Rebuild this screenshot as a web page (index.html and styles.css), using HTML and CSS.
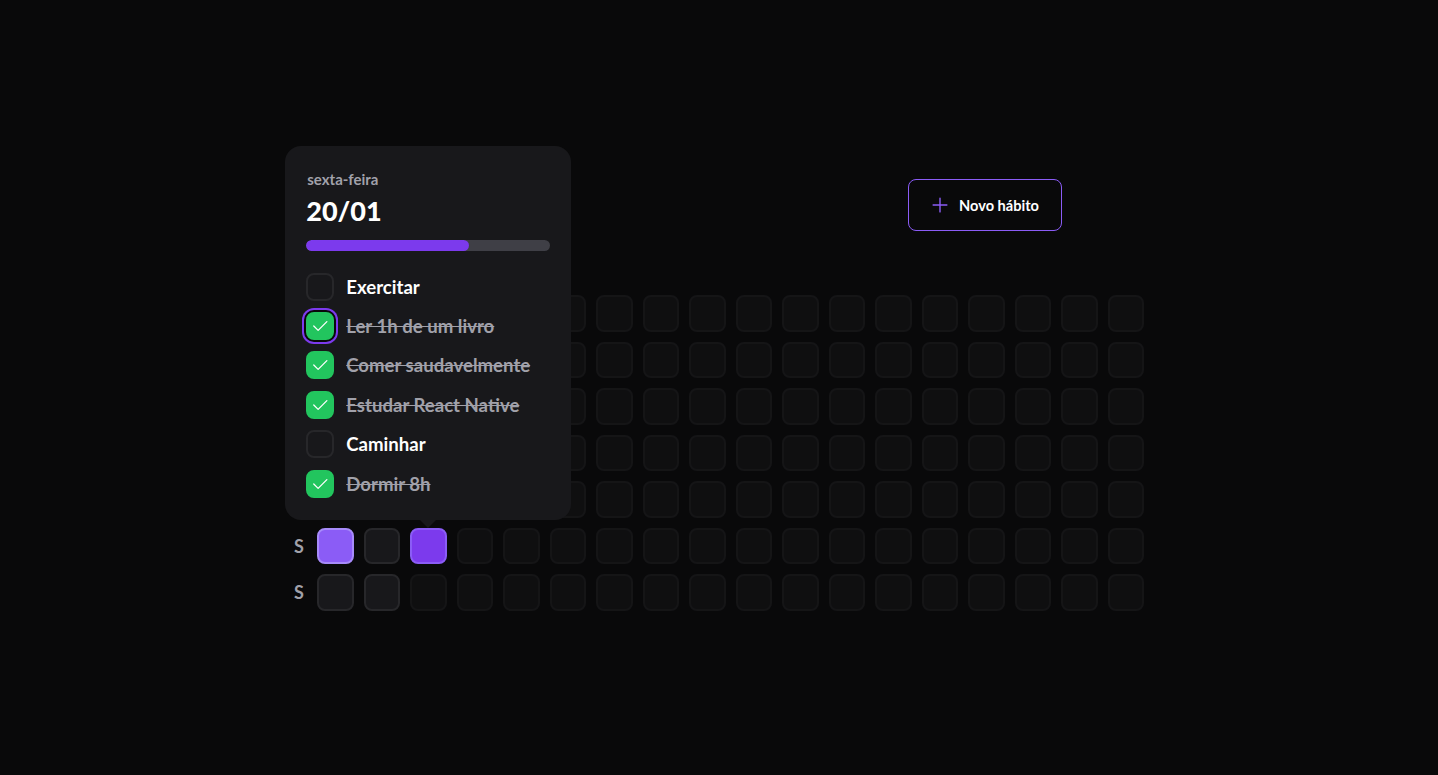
FILE: index.html
```html
<!DOCTYPE html>
<html lang="pt-BR">
<head>
<meta charset="utf-8">
<title>Habits</title>
<link rel="stylesheet" href="styles.css">
</head>
<body>
<main class="app">
  <div class="container">
    <header class="header">
      <button class="new-habit" type="button">
        <svg class="plus" width="20" height="20" viewBox="0 0 256 256" aria-hidden="true"><path d="M40 128h176M128 40v176" fill="none" stroke="currentColor" stroke-width="18" stroke-linecap="round"/></svg>
        <span>Novo hábito</span>
      </button>
    </header>

    <section class="summary">
      <div class="weekdays">
        <div class="weekday">D</div>
        <div class="weekday">S</div>
        <div class="weekday">T</div>
        <div class="weekday">Q</div>
        <div class="weekday">Q</div>
        <div class="weekday">S</div>
        <div class="weekday">S</div>
      </div>

      <div class="days">
        <!-- week 1 -->
        <div class="day"></div><div class="day"></div><div class="day"></div><div class="day"></div><div class="day"></div><div class="day day--100"></div><div class="day"></div>
        <!-- week 2 -->
        <div class="day"></div><div class="day"></div><div class="day"></div><div class="day"></div><div class="day"></div><div class="day"></div><div class="day"></div>
        <!-- week 3 -->
        <div class="day"></div><div class="day"></div><div class="day"></div><div class="day"></div><div class="day"></div>
        <div class="day day--67 day--open">
          <div class="popover">
            <span class="popover-weekday">sexta-feira</span>
            <span class="popover-date">20/01</span>
            <div class="progress"><div class="progress-fill" style="width: 66.67%"></div></div>
            <ul class="habit-list">
              <li class="habit"><span class="check"></span><span class="habit-title">Exercitar</span></li>
              <li class="habit habit--done"><span class="check check--on check--focus"><svg viewBox="0 0 256 256" width="20" height="20"><polyline points="216 72 104 184 48 128" fill="none" stroke="currentColor" stroke-width="16" stroke-linecap="round" stroke-linejoin="round"/></svg></span><span class="habit-title">Ler 1h de um livro</span></li>
              <li class="habit habit--done"><span class="check check--on"><svg viewBox="0 0 256 256" width="20" height="20"><polyline points="216 72 104 184 48 128" fill="none" stroke="currentColor" stroke-width="16" stroke-linecap="round" stroke-linejoin="round"/></svg></span><span class="habit-title">Comer saudavelmente</span></li>
              <li class="habit habit--done"><span class="check check--on"><svg viewBox="0 0 256 256" width="20" height="20"><polyline points="216 72 104 184 48 128" fill="none" stroke="currentColor" stroke-width="16" stroke-linecap="round" stroke-linejoin="round"/></svg></span><span class="habit-title">Estudar React Native</span></li>
              <li class="habit"><span class="check"></span><span class="habit-title">Caminhar</span></li>
              <li class="habit habit--done"><span class="check check--on"><svg viewBox="0 0 256 256" width="20" height="20"><polyline points="216 72 104 184 48 128" fill="none" stroke="currentColor" stroke-width="16" stroke-linecap="round" stroke-linejoin="round"/></svg></span><span class="habit-title">Dormir 8h</span></li>
            </ul>
            <span class="popover-arrow"></span>
          </div>
        </div>
        <div class="day day--empty"></div>
        <!-- weeks 4-18: placeholders -->
        <div class="day day--empty"></div><div class="day day--empty"></div><div class="day day--empty"></div><div class="day day--empty"></div><div class="day day--empty"></div><div class="day day--empty"></div><div class="day day--empty"></div>
        <div class="day day--empty"></div><div class="day day--empty"></div><div class="day day--empty"></div><div class="day day--empty"></div><div class="day day--empty"></div><div class="day day--empty"></div><div class="day day--empty"></div>
        <div class="day day--empty"></div><div class="day day--empty"></div><div class="day day--empty"></div><div class="day day--empty"></div><div class="day day--empty"></div><div class="day day--empty"></div><div class="day day--empty"></div>
        <div class="day day--empty"></div><div class="day day--empty"></div><div class="day day--empty"></div><div class="day day--empty"></div><div class="day day--empty"></div><div class="day day--empty"></div><div class="day day--empty"></div>
        <div class="day day--empty"></div><div class="day day--empty"></div><div class="day day--empty"></div><div class="day day--empty"></div><div class="day day--empty"></div><div class="day day--empty"></div><div class="day day--empty"></div>
        <div class="day day--empty"></div><div class="day day--empty"></div><div class="day day--empty"></div><div class="day day--empty"></div><div class="day day--empty"></div><div class="day day--empty"></div><div class="day day--empty"></div>
        <div class="day day--empty"></div><div class="day day--empty"></div><div class="day day--empty"></div><div class="day day--empty"></div><div class="day day--empty"></div><div class="day day--empty"></div><div class="day day--empty"></div>
        <div class="day day--empty"></div><div class="day day--empty"></div><div class="day day--empty"></div><div class="day day--empty"></div><div class="day day--empty"></div><div class="day day--empty"></div><div class="day day--empty"></div>
        <div class="day day--empty"></div><div class="day day--empty"></div><div class="day day--empty"></div><div class="day day--empty"></div><div class="day day--empty"></div><div class="day day--empty"></div><div class="day day--empty"></div>
        <div class="day day--empty"></div><div class="day day--empty"></div><div class="day day--empty"></div><div class="day day--empty"></div><div class="day day--empty"></div><div class="day day--empty"></div><div class="day day--empty"></div>
        <div class="day day--empty"></div><div class="day day--empty"></div><div class="day day--empty"></div><div class="day day--empty"></div><div class="day day--empty"></div><div class="day day--empty"></div><div class="day day--empty"></div>
        <div class="day day--empty"></div><div class="day day--empty"></div><div class="day day--empty"></div><div class="day day--empty"></div><div class="day day--empty"></div><div class="day day--empty"></div><div class="day day--empty"></div>
        <div class="day day--empty"></div><div class="day day--empty"></div><div class="day day--empty"></div><div class="day day--empty"></div><div class="day day--empty"></div><div class="day day--empty"></div><div class="day day--empty"></div>
        <div class="day day--empty"></div><div class="day day--empty"></div><div class="day day--empty"></div><div class="day day--empty"></div><div class="day day--empty"></div><div class="day day--empty"></div><div class="day day--empty"></div>
        <div class="day day--empty"></div><div class="day day--empty"></div><div class="day day--empty"></div><div class="day day--empty"></div><div class="day day--empty"></div><div class="day day--empty"></div><div class="day day--empty"></div>
      </div>
    </section>
  </div>
</main>
</body>
</html>
```

FILE: styles.css
```css
* { box-sizing: border-box; }

html, body {
  margin: 0;
  height: 100%;
  background: #09090a;
  color: #ffffff;
  font-family: "Lato", "Inter", sans-serif;
}

.app {
  width: 100%;
  height: 100%;
  padding: 179px 0 0 291px;
}

.container {
  display: flex;
  flex-direction: column;
  gap: 64px;
  width: 853px;
}

.header {
  display: flex;
  justify-content: flex-end;
  width: 771px;
}

.new-habit {
  display: flex;
  align-items: center;
  gap: 9px;
  height: 52px;
  padding: 0 22px 0 21px;
  background: transparent;
  border: 1px solid #8b5cf6;
  border-radius: 8px;
  color: #ffffff;
  font-family: inherit;
  font-size: 14.6px;
  font-weight: 700;
  cursor: pointer;
}

.plus { color: #8b5cf6; display: block; }

.summary {
  display: flex;
  gap: 10px;
}

.weekdays {
  display: grid;
  grid-template-rows: repeat(7, 36.5px);
  row-gap: 10px;
  width: 16px;
}

.weekday {
  display: flex;
  align-items: center;
  justify-content: center;
  color: #a1a1aa;
  font-size: 18px;
  font-weight: 700;
}

.days {
  display: grid;
  grid-template-rows: repeat(7, 36.5px);
  grid-auto-flow: column;
  grid-auto-columns: 36.5px;
  gap: 10px;
}

.day {
  position: relative;
  width: 36.5px;
  height: 36.5px;
  background: #18181b;
  border: 2px solid #27272a;
  border-radius: 8px;
}

.day--empty { opacity: 0.4; }

.day--100 { background: #8b5cf6; border-color: #a78bfa; }
.day--67 { background: #7c3aed; border-color: #8b5cf6; }

/* offset is measured from the padding box: 2px border + 8px gap */
.popover {
  position: absolute;
  left: 50%;
  bottom: calc(100% + 10px);
  width: 286px;
  margin-left: -143px;
  padding: 23px 21px 22px 21px;
  background: #18181b;
  border-radius: 16px;
  display: flex;
  flex-direction: column;
  z-index: 10;
}

.popover-arrow {
  position: absolute;
  left: 50%;
  bottom: -8px;
  margin-left: -8px;
  width: 0;
  height: 0;
  border-left: 8px solid transparent;
  border-right: 8px solid transparent;
  border-top: 8px solid #18181b;
}

.popover-weekday {
  font-size: 15px;
  line-height: 20px;
  font-weight: 700;
  color: #a1a1aa;
  padding-left: 1px;
}

.popover-date {
  margin-top: 4px;
  font-size: 27px;
  line-height: 36px;
  font-weight: 900;
  color: #ffffff;
}

.progress {
  margin-top: 11px;
  height: 11px;
  border-radius: 8px;
  background: #3f3f46;
  overflow: hidden;
}

.progress-fill {
  height: 100%;
  background: #7c3aed;
  border-radius: 8px;
}

.habit-list {
  list-style: none;
  margin: 22px 0 0;
  padding: 0;
  display: flex;
  flex-direction: column;
  gap: 11.4px;
}

.habit {
  display: flex;
  align-items: center;
  gap: 12px;
  height: 28px;
}

.check {
  flex: none;
  width: 28px;
  height: 28px;
  border-radius: 8px;
  background: #18181b;
  border: 2px solid #27272a;
  display: flex;
  align-items: center;
  justify-content: center;
  color: #ffffff;
}

.check--on { background: #22c55e; border-color: #22c55e; }

.check--focus {
  box-shadow: 0 0 0 2px #09090a, 0 0 0 4px #7c3aed;
}

.check svg { display: block; }

.habit-title {
  font-size: 18.6px;
  line-height: 28px;
  font-weight: 700;
  color: #ffffff;
}

.habit--done .habit-title {
  color: #a1a1aa;
  text-decoration: line-through;
}
```
